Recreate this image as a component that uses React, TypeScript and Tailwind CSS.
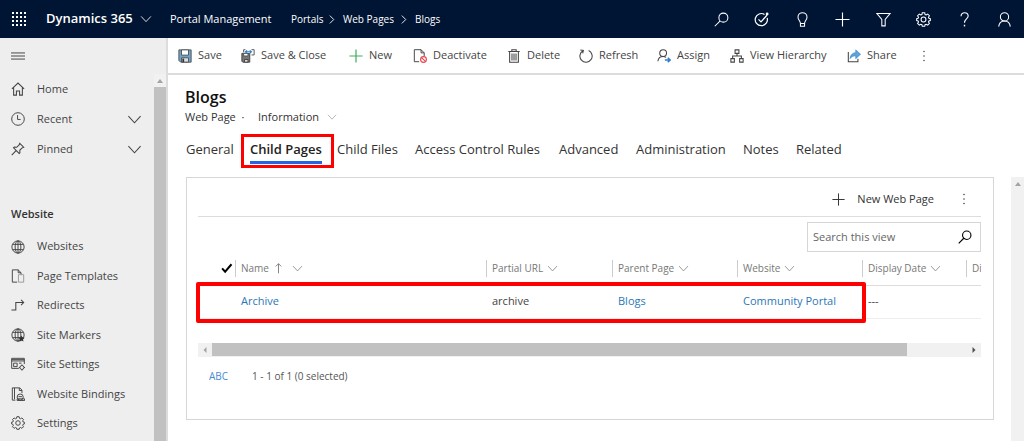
import type { ReactNode } from 'react';
import clsx from 'clsx';

interface IconProps {
  children: ReactNode;
  className?: string;
}

const Icon = ({ children, className = 'size-[14px]' }: IconProps) => (
  <svg
    viewBox="0 0 16 16"
    fill="none"
    stroke="currentColor"
    strokeWidth={1.1}
    className={clsx('shrink-0', className)}
    aria-hidden="true"
  >
    {children}
  </svg>
);

const Chevron = ({ className }: { className?: string }) => (
  <Icon className={className}>
    <path d="M1.5 4.5 8 11.5l6.5-7" />
  </Icon>
);

const ChevronRight = () => (
  <Icon className="size-[9px]">
    <path d="m5 1 7 7-7 7" strokeWidth={1.6} />
  </Icon>
);

const SearchShape = () => (
  <>
    <circle cx="10" cy="6" r="4.8" />
    <path d="M6.6 9.4.8 15.2" />
  </>
);

const GearShape = () => (
  <>
    <path d="m6.7.8-.4 1.9-1.2.5-1.6-1-1.8 1.8 1 1.6-.5 1.2-1.5.3v2l1.5.4.5 1.2-1 1.6 1.8 1.8 1.6-1 1.2.5.4 1.6h2.6l.4-1.6 1.2-.5 1.6 1 1.8-1.8-1-1.6.5-1.2 1.5-.4v-2l-1.5-.3-.5-1.2 1-1.6-1.8-1.8-1.6 1-1.2-.5L9.3.8z" />
    <circle cx="8" cy="8" r="2.6" />
  </>
);

const GlobeShape = () => (
  <>
    <circle cx="8" cy="8" r="7" />
    <ellipse cx="8" cy="8" rx="3.3" ry="7" />
    <path d="M8 1v14M1.8 5h12.4M1.8 11h12.4" />
  </>
);

const PersonShape = () => (
  <>
    <circle cx="8" cy="5.2" r="4.4" />
    <path d="M1.8 15.6C2.2 12 4.8 9.6 8 9.6s5.8 2.4 6.2 6" />
  </>
);

const DotsShape = () => (
  <g fill="currentColor" stroke="none">
    <circle cx="8" cy="2" r="1" />
    <circle cx="8" cy="8" r="1" />
    <circle cx="8" cy="14" r="1" />
  </g>
);

const headerActions = [
  { label: 'Search', shape: <SearchShape /> },
  {
    label: 'Assistant',
    shape: (
      <>
        <path d="M11.2 2.6A6.5 6.5 0 1 0 14 6.2" strokeWidth={1.3} />
        <path d="m4.8 7.8 2.7 2.7L14 3.2" strokeWidth={1.3} />
        <circle cx="14" cy="2" r="1.5" fill="currentColor" stroke="none" />
      </>
    ),
  },
  {
    label: 'Ideas',
    shape: <path d="M5.8 12.3c0-2.8-2.6-3.6-2.6-6.8a4.8 4.8 0 0 1 9.6 0c0 3.2-2.6 4-2.6 6.8zM5.8 12.3v2.9h4.4v-2.9" />,
  },
  { label: 'Add', shape: <path d="M8 .5v15M.5 8h15" strokeWidth={1.2} /> },
  { label: 'Filter', shape: <path d="M.8 1.5h14.4L9.8 8v6.8H6.2V8z" /> },
  { label: 'Settings', shape: <GearShape /> },
  {
    label: 'Help',
    shape: (
      <>
        <path d="M4.3 4.5c0-2.2 1.6-3.7 3.8-3.7s3.8 1.4 3.8 3.5c0 3-3.9 3.4-3.9 7.2" strokeWidth={1.2} />
        <path d="M8 13.6v1.8" strokeWidth={1.5} />
      </>
    ),
  },
  { label: 'Account', shape: <PersonShape /> },
];

const commands = [
  {
    label: 'Save',
    width: 'w-[63px]',
    shape: (
      <>
        <path d="M1 1h14v14H3l-2-2z" fill="#6aa5d0" stroke="#555" />
        <path d="M4 1h8v6H4z" fill="#fff" stroke="#555" />
        <path d="M4 10h8v5H4z" fill="#ddd" stroke="#555" />
        <path d="M6 11v4" stroke="#333" strokeWidth={2} />
      </>
    ),
  },
  {
    label: 'Save & Close',
    width: 'w-[108px]',
    shape: (
      <>
        <path d="M1 5h9v10H2l-1-1z" fill="#777" stroke="#444" />
        <path d="M3 5h5v3H3z" fill="#fff" stroke="#555" />
        <path d="M4 12h4v3H4z" fill="#ddd" stroke="#444" />
        <path d="M5 .8H3v3M12 .8h3v6h-3" stroke="#555" />
        <path d="M5 3.2h7M7 1.5 5 3.2l2 1.7M10 1.5l2 1.7-2 1.7" stroke="#2f7fc6" strokeWidth={1.2} />
      </>
    ),
  },
  { label: 'New', width: 'w-[64px]', shape: <path d="M8 .5v15M.5 8h15" stroke="#3fae5d" strokeWidth={1.4} /> },
  {
    label: 'Deactivate',
    width: 'w-[94px]',
    shape: (
      <>
        <path d="M7 14.5H1.5V.8h7.7l3.6 3.6V8M9.2.8v3.6h3.6" />
        <circle cx="12" cy="12" r="3.3" fill="#fff" stroke="#e5484d" strokeWidth={1.3} />
        <path d="m9.8 9.8 4.4 4.4" stroke="#e5484d" strokeWidth={1.3} />
      </>
    ),
  },
  {
    label: 'Delete',
    width: 'w-[72px]',
    shape: <path d="M1.5 2.8h13M5.5 2.8V.8h5v2M3 2.8v12.4h10V2.8M5.7 5v8M8 5v8M10.3 5v8" strokeWidth={1.2} />,
  },
  {
    label: 'Refresh',
    width: 'w-[78px]',
    shape: <path d="M11 1.7A7 7 0 1 1 4.5 2M1.5 1.2l3.5.5-.8 3.4" strokeWidth={1.2} />,
  },
  {
    label: 'Assign',
    width: 'w-[73px]',
    shape: (
      <>
        <circle cx="7" cy="4.7" r="3.9" strokeWidth={1.2} />
        <path d="M1 14c.4-3.2 2.9-5.4 6-5.4 1.3 0 2.4.4 3.4 1" strokeWidth={1.2} />
        <path d="M9 12.5h5.5M12.3 10l2.7 2.5-2.7 2.5" stroke="#2f7fc6" strokeWidth={1.7} />
      </>
    ),
  },
  {
    label: 'View Hierarchy',
    width: 'w-[117px]',
    shape: <path d="M5.8 1h4.4v4H5.8zM1 11h4v4H1zM11 11h4v4h-4zM8 5v3M3 11V8h10v3" strokeWidth={1.2} />,
  },
  {
    label: 'Share',
    width: 'w-[71px]',
    shape: (
      <>
        <path d="M1.5 3.5v11h11V11" strokeWidth={1.2} />
        <path
          d="M3.5 11C4 6.5 6.5 4.3 10 4.2V1l5.5 5-5.5 5V7.8C7 7.8 5 8.8 3.5 11z"
          fill="#5ba5dd"
          stroke="#2f7fc6"
          strokeWidth={0.7}
        />
      </>
    ),
  },
];

const quickLinks = [
  {
    label: 'Home',
    expandable: false,
    shape: <path d="M1 7.8 8 1.2l7 6.6M3 6.2V15h3.2v-4.8h3.6V15H13V6.2" strokeWidth={1.2} />,
  },
  {
    label: 'Recent',
    expandable: true,
    shape: (
      <>
        <circle cx="8" cy="8" r="7.2" />
        <path d="M7.5 3.5v5H11" />
      </>
    ),
  },
  {
    label: 'Pinned',
    expandable: true,
    shape: <path d="m10 1.5 4.5 4.5-1.5.5-3 3 .2 2.7-.9.9-6.4-6.4.9-.9 2.7.2 3-3zM5.8 9.8.8 15" strokeWidth={1.2} />,
  },
];

const siteLinks = [
  { label: 'Websites', shape: <GlobeShape /> },
  {
    label: 'Page Templates',
    shape: (
      <>
        <path d="M7 15H1.5V1h6.7l3.3 3.3V6M8.2 1v3.3h3.3" />
        <path d="M8.5 6.5h6V15h-6z" stroke="#999" />
      </>
    ),
  },
  { label: 'Redirects', shape: <path d="M.5 12.5h5V4H14M11.5 1l3 3-3 3" strokeWidth={1.2} /> },
  {
    label: 'Site Markers',
    shape: (
      <>
        <GlobeShape />
        <path d="m12 8.5 1.1 2.3 2.5.3-1.8 1.8.4 2.6-2.2-1.2-2.2 1.2.4-2.6-1.8-1.8 2.5-.3z" fill="#333" stroke="none" />
      </>
    ),
  },
  {
    label: 'Site Settings',
    shape: (
      <>
        <path d="M9 13H.8V1.5h14.4V8M.8 4.5h14.4M.8 3h14.4M3 7h4v4H3zM9 7h3" />
        <circle cx="12.5" cy="12" r="2.3" />
        <path d="M12.5 8.5v1.2M12.5 14.3v1.2M9 12h1.2M14.8 12H16" />
      </>
    ),
  },
  {
    label: 'Website Bindings',
    shape: (
      <>
        <path d="M5 15H1.5V1H10l2.5 2.5V7M4 1v13M9.5 1v3h3" />
        <circle cx="10.5" cy="11.5" r="3.5" />
        <path d="M7 13.5h8.5v2H7zM8.5 11h4" />
      </>
    ),
  },
  { label: 'Settings', shape: <GearShape /> },
];

const tabs = [
  { label: 'General', width: 'w-[64px]' },
  { label: 'Child Pages', width: 'w-[87px]', active: true },
  { label: 'Child Files', width: 'w-[78px]' },
  { label: 'Access Control Rules', width: 'w-[144px]' },
  { label: 'Advanced', width: 'w-[77px]' },
  { label: 'Administration', width: 'w-[107px]' },
  { label: 'Notes', width: 'w-[53px]' },
  { label: 'Related', width: 'w-[60px]' },
];

const columns = [
  { label: 'Name', width: 'w-[251px]', sorted: true },
  { label: 'Partial URL', width: 'w-[126px]' },
  { label: 'Parent Page', width: 'w-[125px]' },
  { label: 'Website', width: 'w-[125px]' },
  { label: 'Display Date', width: 'w-[104px]' },
];

const Header = () => (
  <header className="flex h-[38px] shrink-0 items-center bg-[#001433] text-white">
    <button type="button" aria-label="App launcher" className="ml-3 flex size-[14px]">
      <svg viewBox="0 0 14 14" fill="currentColor" className="size-[14px]">
        {[0, 4, 8, 12].map((y) =>
          [0, 4, 8, 12].map((x) => <rect key={`${x}-${y}`} x={x} y={y} width="2" height="2" />),
        )}
      </svg>
    </button>
    <button type="button" className="ml-5 flex w-[124px] items-center text-[13px] font-semibold whitespace-nowrap">
      <span className="w-[94px] text-left">Dynamics 365</span>
      <Chevron className="size-3" />
    </button>
    <a href="#app" className="w-[121px] text-[11px] whitespace-nowrap">Portal Management</a>
    <nav aria-label="Breadcrumb" className="flex items-center text-[10px] whitespace-nowrap">
      <a href="#portals" className="w-9">Portals</a>
      <ChevronRight />
      <a href="#web-pages" className="ml-[7px] w-[56px]">Web Pages</a>
      <ChevronRight />
      <a href="#blogs" className="ml-[7px]">Blogs</a>
    </nav>
    <div className="mr-3 ml-auto flex w-[298px] justify-between">
      {headerActions.map(({ label, shape }) => (
        <button key={label} type="button" aria-label={label}>
          <Icon className="size-[15px]">{shape}</Icon>
        </button>
      ))}
    </div>
  </header>
);

const Sidebar = () => (
  <aside className="flex w-[168px] shrink-0 flex-col border-r-2 border-[#dcdcdc] bg-[#eee] text-[11px] text-[#444]">
    <div className="flex h-9 shrink-0 items-center pl-[11px]">
      <button type="button" aria-label="Toggle navigation">
        <Icon>
          <path d="M0 4.5h16M0 8h16M0 11.5h16" />
        </Icon>
      </button>
    </div>
    <div className="flex min-h-0 flex-1">
      <nav className="min-w-0 flex-1">
        <ul>
          {quickLinks.map(({ label, shape, expandable }) => (
            <li key={label}>
              <a href={`#${label}`} className="flex h-[30px] items-center pr-3 pl-[11px]">
                <Icon>{shape}</Icon>
                <span className="ml-3 flex-1">{label}</span>
                {expandable && <Chevron className="size-[15px]" />}
              </a>
            </li>
          ))}
        </ul>
        <h2 className="mt-10 pl-[11px] leading-5 font-semibold text-[#333]">Website</h2>
        <ul className="mt-2 grid h-[206px] grid-rows-7">
          {siteLinks.map(({ label, shape }) => (
            <li key={label} className="flex">
              <a href={`#${label}`} className="flex items-center gap-3 pl-[11px] whitespace-nowrap">
                <Icon>{shape}</Icon>
                {label}
              </a>
            </li>
          ))}
        </ul>
      </nav>
      <div className="flex w-3 flex-col bg-[#f1f1f1]">
        <svg viewBox="0 0 12 13" className="h-[13px] w-3" fill="#a3a3a3">
          <path d="M3 9h6L6 5z" />
        </svg>
        <div className="flex-1 bg-[#c1c1c1]" />
      </div>
    </div>
  </aside>
);

const CommandBar = () => (
  <div className="flex h-[37px] shrink-0 items-center border-b-2 border-[#dcdcdc] pl-[10px] text-[11px] text-[#444]">
    {commands.map(({ label, width, shape }) => (
      <button key={label} type="button" className={clsx('flex items-center gap-[6px] whitespace-nowrap', width)}>
        <Icon>{shape}</Icon>
        {label}
      </button>
    ))}
    <button type="button" aria-label="More commands">
      <Icon className="size-3">
        <DotsShape />
      </Icon>
    </button>
  </div>
);

const Tabs = () => (
  <div role="tablist" className="mt-2 flex h-[34px] pl-[18px] text-[13px] text-[#333]">
    {tabs.map(({ label, width, active }) => (
      <div key={label} className={clsx('relative shrink-0', width)}>
        <button
          type="button"
          role="tab"
          aria-selected={!!active}
          className={clsx(
            'mt-1 border-b-[3px] leading-[23px] whitespace-nowrap',
            active ? 'border-[#2266e3] font-semibold text-[#222]' : 'border-transparent',
          )}
        >
          {label}
        </button>
        {active && (
          <div className="pointer-events-none absolute top-0 -left-[9px] h-[34px] w-[93px] border-3 border-[#f00]" />
        )}
      </div>
    ))}
  </div>
);

const ChildPagesTable = () => (
  <div className="relative">
    <div className="overflow-hidden">
      <table className="w-full table-fixed text-left text-[11px] whitespace-nowrap text-[#444]">
        <thead>
          <tr className="h-[33px] border-b border-[#ddd] text-[10px] text-[#777]">
            <th className="w-[37px] pl-[23px]" aria-label="Selected">
              <Icon className="size-3 text-black">
                <path d="m1.5 8.5 4 4.5L14 3" strokeWidth={2.6} />
              </Icon>
            </th>
            {columns.map(({ label, width, sorted }) => (
              <th key={label} className={clsx('p-0 font-normal', width)}>
                <div className="flex h-[17px] items-center gap-1 border-l border-[#ccc] pl-[5px]">
                  {label}
                  {sorted && (
                    <Icon className="mr-1 size-[11px]">
                      <path d="M8 1v14M4 5l4-4 4 4" strokeWidth={1.3} />
                    </Icon>
                  )}
                  <Chevron className="size-[11px]" />
                </div>
              </th>
            ))}
            <th className="p-0 font-normal">
              <div className="flex h-[17px] items-center border-l border-[#ccc] pl-[5px]">Di</div>
            </th>
          </tr>
        </thead>
        <tbody>
          <tr className="h-[33px] border-b border-[#eee]">
            <td />
            <td className="pl-[6px]"><a href="#archive" className="text-[#2b77b8]">Archive</a></td>
            <td className="pl-[6px]">archive</td>
            <td className="pl-[6px]"><a href="#blogs" className="text-[#2b77b8]">Blogs</a></td>
            <td className="pl-[6px]"><a href="#community" className="text-[#2b77b8]">Community Portal</a></td>
            <td className="pl-[6px]">---</td>
            <td />
          </tr>
        </tbody>
      </table>
    </div>
    <div className="pointer-events-none absolute top-[30px] -left-[2px] h-[41px] w-[670px] rounded-xs border-4 border-[#f00]" />
  </div>
);

const GridPanel = () => (
  <section className="mr-[17px] ml-[18px] h-[243px] min-w-0 flex-1 border border-[#d6d6d6] pr-3 pl-[11px]">
    <div className="flex h-[39px] items-center justify-end border-b border-[#ddd] pt-1 pr-[11px] text-[11px] text-[#333]">
      <button type="button" className="flex items-center gap-3">
        <Icon className="size-[13px]">
          <path d="M8 .5v15M.5 8h15" strokeWidth={1.2} />
        </Icon>
        New Web Page
      </button>
      <button type="button" aria-label="More actions" className="ml-6">
        <Icon className="size-3">
          <DotsShape />
        </Icon>
      </button>
    </div>
    <form className="mt-[5px] ml-auto flex h-[30px] w-[174px] items-center border border-[#d6d6d6] pr-2 pl-[5px]">
      <input
        type="search"
        aria-label="Search this view"
        placeholder="Search this view"
        className="min-w-0 flex-1 text-[11px] outline-none placeholder:text-[#666]"
      />
      <button type="button" aria-label="Search" className="text-black">
        <Icon>
          <g strokeWidth={1.3}>
            <SearchShape />
          </g>
        </Icon>
      </button>
    </form>
    <ChildPagesTable />
    <div className="mt-6 flex h-[14px] items-center bg-[#f1f1f1]">
      <svg viewBox="0 0 14 14" className="size-[14px]" fill="#a3a3a3">
        <path d="M8.5 4v6l-3-3z" />
      </svg>
      <div className="flex-1">
        <div className="h-[13px] w-[92%] bg-[#c1c1c1]" />
      </div>
      <svg viewBox="0 0 14 14" className="size-[14px]" fill="#505050">
        <path d="M5.5 4v6l3-3z" />
      </svg>
    </div>
    <div className="mt-[11px] flex items-center pl-[11px] text-[10px] leading-4 text-[#555]">
      <button type="button" className="w-[43px] text-left text-[#4a8bd0]">ABC</button>
      <span>1 - 1 of 1 (0 selected)</span>
    </div>
  </section>
);

export default function App() {
  return (
    <div className="flex h-screen flex-col overflow-hidden bg-white font-['Open_Sans','Noto_Sans',sans-serif]">
      <Header />
      <div className="flex min-h-0 flex-1">
        <Sidebar />
        <main className="flex min-w-0 flex-1 flex-col">
          <CommandBar />
          <div className="mt-3 pl-[17px]">
            <h1 className="text-[16px] leading-[21px] font-semibold text-[#111]">Blogs</h1>
            <div className="flex h-[18px] items-center text-[11px] text-[#333]">
              <span className="w-[73px]">Web Page &nbsp;·</span>
              <button type="button" className="flex items-center gap-2">
                Information
                <Chevron className="size-[10px] text-[#999]" />
              </button>
            </div>
          </div>
          <Tabs />
          <div className="mt-[9px] flex min-h-0 flex-1">
            <GridPanel />
            <div className="w-[13px] bg-[#f1f1f1]">
              <svg viewBox="0 0 13 14" className="h-[14px] w-[13px]" fill="#a3a3a3">
                <path d="M4 9h6L7 5z" />
              </svg>
            </div>
          </div>
        </main>
      </div>
    </div>
  );
}
